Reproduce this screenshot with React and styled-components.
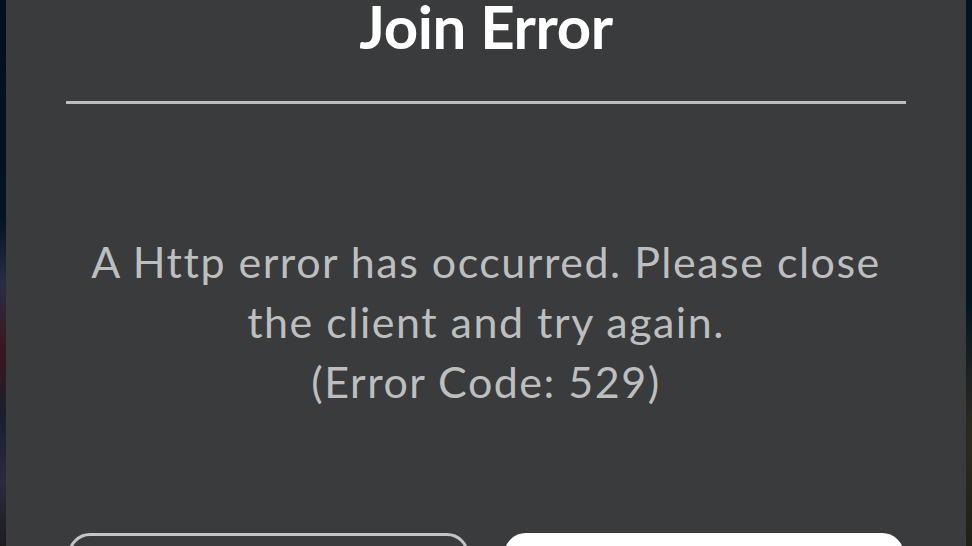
import React from "react";
import styled, { createGlobalStyle } from "styled-components";

const GlobalStyles = createGlobalStyle`
  * {
    margin: 0;
    padding: 0;
    box-sizing: border-box;
  }
  html, body {
    height: 100%;
    overflow: hidden;
  }
  body {
    font-family: "Lato", "Open Sans", sans-serif;
    font-variant-ligatures: none;
    background:
      linear-gradient(180deg, #01111c 0%, #01151f 40%, #2a2c44 52%, #3a1720 64%, #1a1f2c 76%, #2a2a3c 88%, #1e1c20 100%) left / 6px 100% no-repeat,
      linear-gradient(180deg, #01141f 0%, #02161f 55%, #1c2124 68%, #2d2b1d 80%, #202019 100%) right / 6px 100% no-repeat,
      #1a1c22;
  }
`;

const Page = styled.main`
  height: 546px;
  padding: 0 6px;
  display: flex;
`;

const Dialog = styled.section`
  flex: 1;
  background: #393b3d;
  display: flex;
  flex-direction: column;
  align-items: center;
  padding: 0 60px;
  margin-top: -12px;

  & > * {
    flex-shrink: 0;
  }
`;

const Title = styled.h1`
  color: #ffffff;
  font-weight: 700;
  font-size: 60px;
  line-height: 76px;
  letter-spacing: -0.4px;
`;

const Divider = styled.div`
  width: 100%;
  height: 3px;
  background: #bcbdbd;
  margin-top: 37px;
`;

const Message = styled.p`
  color: #bdbebe;
  font-size: 43px;
  line-height: 60px;
  letter-spacing: 1.5px;
  text-align: center;
  margin-top: 128px;
`;

const Buttons = styled.div`
  width: 100%;
  display: flex;
  gap: 35px;
  padding: 0 2px;
  margin-top: 121px;
`;

const Button = styled.button`
  flex: 1;
  height: 64px;
  border-radius: 22px;
  font-family: inherit;
  font-size: 36px;
  border: 3px solid ${(p) => (p.$primary ? "#ffffff" : "#c4c5c5")};
  background: ${(p) => (p.$primary ? "#ffffff" : "transparent")};
  color: ${(p) => (p.$primary ? "#393b3d" : "#ffffff")};
`;

const App = () => {
  return (
    <>
      <GlobalStyles />
      <Page>
        <Dialog>
          <Title>Join Error</Title>
          <Divider />
          <Message>
            A Http error has occurred. Please close
            <br />
            the client and try again.
            <br />
            (Error Code: 529)
          </Message>
          <Buttons>
            <Button>Leave</Button>
            <Button $primary>Reconnect</Button>
          </Buttons>
        </Dialog>
      </Page>
    </>
  );
};

export default App;
